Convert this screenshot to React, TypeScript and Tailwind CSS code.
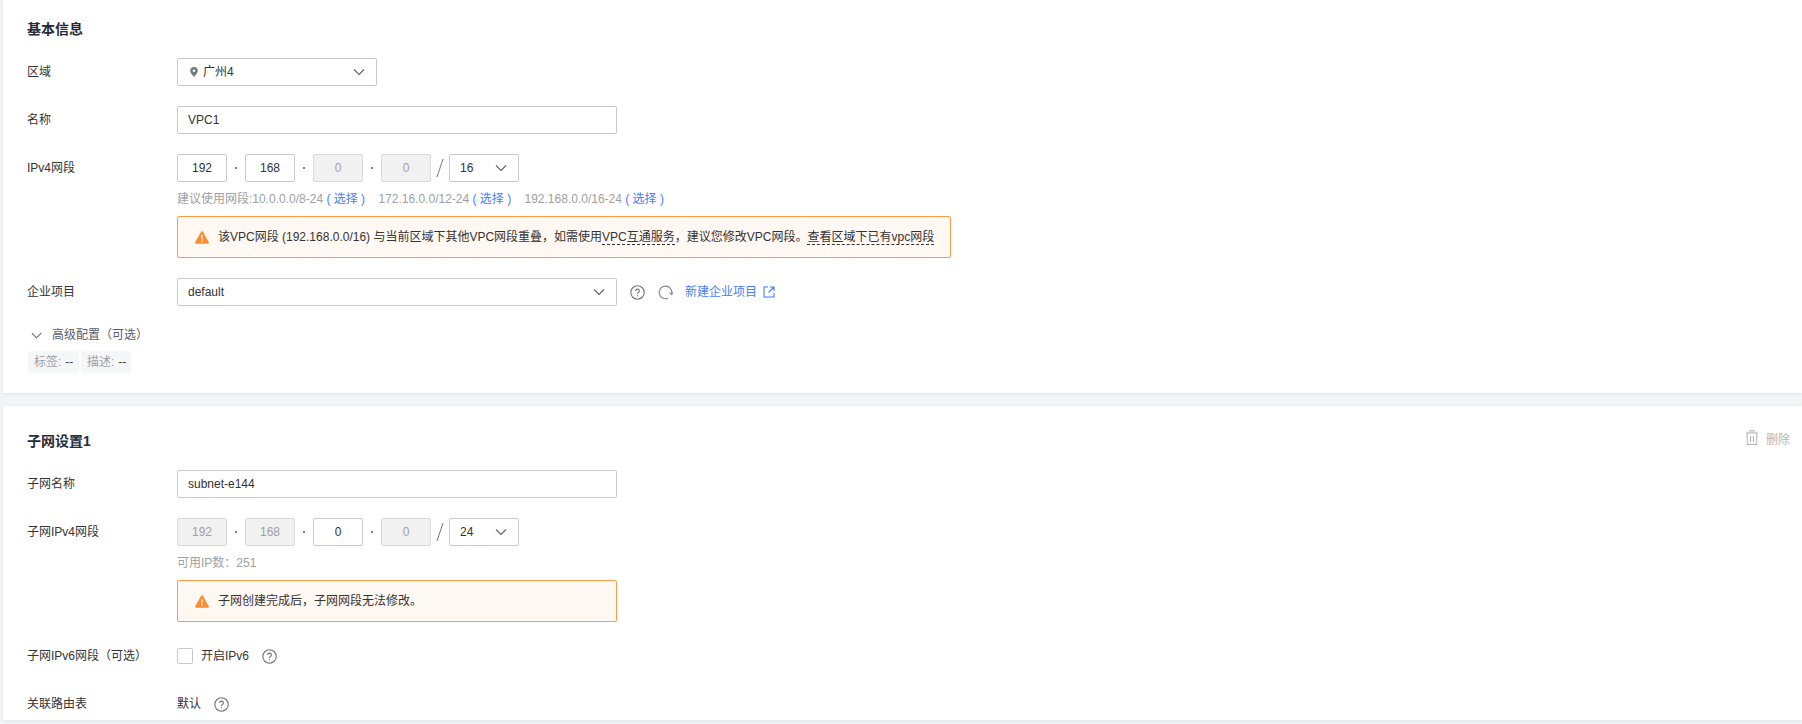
import { ReactNode } from 'react'

const FONT = 'font-["Liberation_Sans","Noto_Sans_CJK_SC",sans-serif]'

function Chevron({ className = 'w-[14px] h-[14px]' }: { className?: string }) {
  return (
    <svg className={className} viewBox="0 0 14 14" fill="none" stroke="#5f636e" strokeWidth={1.1}>
      <path d="M2 4.5l5 5 5-5" />
    </svg>
  )
}

function Help() {
  return (
    <svg className="w-[15px] h-[15px] shrink-0" viewBox="0 0 15 15" fill="none" stroke="#707277" strokeWidth={1.1}>
      <circle cx="7.5" cy="7.5" r="6.7" />
      <path d="M5.6 6c0-1.1.8-1.9 1.9-1.9s1.9.8 1.9 1.8c0 1.4-1.9 1.5-1.9 3" />
      <path d="M7.5 10.2v1.1" />
    </svg>
  )
}

function Warn() {
  return (
    <svg className="w-[14px] h-[13px] shrink-0" viewBox="0 0 14 13">
      <path d="M7 .2a1 1 0 0 1 .9.5l5.9 10.6a1 1 0 0 1-.9 1.5H1.1a1 1 0 0 1-.9-1.5L6.1.7A1 1 0 0 1 7 .2z" fill="#ff8c33" />
      <path d="M6.3 4h1.4l-.2 4.6h-1zM6.3 9.6h1.4v1.5H6.3z" fill="#fff" />
    </svg>
  )
}

function Row({ label, children, className = 'mt-5' }: { label: string; children: ReactNode; className?: string }) {
  return (
    <div className={`flex items-center min-h-7 ${className}`}>
      <div className="w-[150px] shrink-0 text-[#333]">{label}</div>
      {children}
    </div>
  )
}

function Octet({ value, disabled }: { value: string; disabled?: boolean }) {
  return (
    <div
      className={`w-[50px] h-7 flex items-center justify-center rounded-[2px] border ${
        disabled ? 'bg-[#f1f1f1] border-[#d9d9d9] text-[#a0a0a0]' : 'bg-white border-[#c9c9c9] text-[#333]'
      }`}
    >
      {value}
    </div>
  )
}

function IpRow({ parts, mask }: { parts: { v: string; off?: boolean }[]; mask: string }) {
  return (
    <div className="flex items-center">
      {parts.map((p, i) => (
        <div key={i} className="flex items-center">
          {i > 0 && <span className="w-[2px] h-[2px] mx-2 bg-[#808080]" />}
          <Octet value={p.v} disabled={p.off} />
        </div>
      ))}
      <span className="w-[18px] flex justify-center">
        <svg className="w-[8px] h-[20px]" viewBox="0 0 8 20" fill="none" stroke="#777" strokeWidth={1}>
          <path d="M7 1L1 19" />
        </svg>
      </span>
      <div className="w-[70px] h-7 flex items-center justify-between px-[10px] bg-white border border-[#c9c9c9] rounded-[2px] text-[#333]">
        {mask}
        <Chevron />
      </div>
    </div>
  )
}

function Alert({ children, width }: { children: ReactNode; width: string }) {
  return (
    <div className={`ml-[150px] mt-2 h-[42px] flex items-center gap-[9px] pl-[17px] bg-[#fff8f3] border border-[#ff9a4a] rounded-[2px] text-[#333] ${width}`}>
      <Warn />
      <div className="whitespace-nowrap">{children}</div>
    </div>
  )
}

function Pick() {
  return <span className="text-[#4a7bff]"> ( 选择 ) </span>
}

export default function App() {
  return (
    <div className={`h-[724px] overflow-hidden bg-[#f3f4f6] pl-[3px] text-[12px] leading-[18px] ${FONT}`}>
      {/* basic info */}
      <section className="bg-white pt-[19px] pb-5 pl-6 h-[393px] shadow-[0_1px_4px_rgba(0,0,0,0.08)]">
        <h2 className="text-[14px] leading-5 font-bold text-[#252b3a]">基本信息</h2>

        <Row label="区域" className="mt-[19px]">
          <div className="w-[200px] h-7 flex items-center justify-between pl-3 pr-[10px] bg-white border border-[#c9c9c9] rounded-[2px] text-[#333]">
            <span className="flex items-center gap-[5px]">
              <svg className="w-2 h-[10px]" viewBox="0 0 8 10">
                <path fillRule="evenodd" d="M4 0a3.8 3.8 0 0 1 3.8 3.8C7.8 6.2 4 10 4 10S.2 6.2.2 3.8A3.8 3.8 0 0 1 4 0zm0 2.5a1.3 1.3 0 1 0 0 2.6 1.3 1.3 0 0 0 0-2.6z" fill="#77797f" />
              </svg>
              广州4
            </span>
            <Chevron />
          </div>
        </Row>

        <Row label="名称">
          <div className="w-[440px] h-7 flex items-center px-[10px] bg-white border border-[#c9c9c9] rounded-[2px] text-[#333]">VPC1</div>
        </Row>

        <Row label="IPv4网段">
          <IpRow parts={[{ v: '192' }, { v: '168' }, { v: '0', off: true }, { v: '0', off: true }]} mask="16" />
        </Row>

        <div className="ml-[150px] mt-2 h-[18px] text-[#a0a0a0] whitespace-nowrap">
          建议使用网段:10.0.0.0/8-24<Pick />
          <span className="ml-[10px]">172.16.0.0/12-24</span>
          <Pick />
          <span className="ml-[10px]">192.168.0.0/16-24</span>
          <Pick />
        </div>

        <Alert width="w-[774px]">
          该VPC网段 (192.168.0.0/16) 与当前区域下其他VPC网段重叠，如需使用
          <span className="border-b border-dashed border-[#333]">VPC互通服务</span>
          ，建议您修改VPC网段。
          <span className="border-b border-dashed border-[#333]">查看区域下已有vpc网段</span>
        </Alert>

        <Row label="企业项目">
          <div className="w-[440px] h-7 flex items-center justify-between px-[10px] bg-white border border-[#c9c9c9] rounded-[2px] text-[#333]">
            default
            <Chevron />
          </div>
          <div className="ml-[13px] flex items-center">
            <Help />
            <svg className="ml-[13px] w-[15px] h-[15px]" viewBox="0 0 15 15" fill="none" stroke="#85878c" strokeWidth={1.1}>
              <path d="M10 13.2A6.3 6.3 0 1 1 13.7 8.6" />
              <path d="M11.6 7.6l2.1 2 1-2.4" />
            </svg>
            <span className="ml-3 text-[#4a7bff]">新建企业项目</span>
            <svg className="ml-[6px] w-3 h-3" viewBox="0 0 12 12" fill="none" stroke="#4a7bff" strokeWidth={1.1}>
              <path d="M5 1H1v10h10V7M7 1h4v4M11 1L5.5 6.5" />
            </svg>
          </div>
        </Row>

        <div className="mt-[19px] h-5 flex items-center text-[#575d6c]">
          <Chevron className="ml-[3px] w-[13px] h-[13px]" />
          <span className="ml-[9px]">高级配置（可选）</span>
        </div>
        <div className="ml-[1px] mt-[6px] flex gap-[2px]">
          <span className="h-[22px] w-[51px] flex items-center pl-[6px] bg-[#f5f6f8] rounded-[2px] text-[#a0a0a0]">
            标签:<span className="ml-1 text-[#444]">--</span>
          </span>
          <span className="h-[22px] w-[50px] flex items-center pl-[6px] bg-[#f5f6f8] rounded-[2px] text-[#a0a0a0]">
            描述:<span className="ml-1 text-[#444]">--</span>
          </span>
        </div>
      </section>

      {/* subnet */}
      <section className="mt-[13px] bg-white pt-[25px] pl-6 h-[314px] shadow-[0_1px_4px_rgba(0,0,0,0.08)]">
        <div className="flex justify-between pr-3">
          <h2 className="text-[14px] leading-5 font-bold text-[#252b3a]">子网设置1</h2>
          <div className="-mt-[1px] flex items-start gap-[8px] h-[15px] text-[#b5b5b5]">
            <svg className="w-3 h-[15px]" viewBox="0 0 12 15" fill="none" stroke="#b0b0b0" strokeWidth={1}>
              <path d="M0 3h12M4 3V.7h4V3M1.2 3v11.5h9.6V3M4.6 6v6M7.4 6v6" />
            </svg>
            <span className="pt-[1px]">删除</span>
          </div>
        </div>

        <Row label="子网名称" className="mt-[19px]">
          <div className="w-[440px] h-7 flex items-center px-[10px] bg-white border border-[#c9c9c9] rounded-[2px] text-[#333]">subnet-e144</div>
        </Row>

        <Row label="子网IPv4网段">
          <IpRow parts={[{ v: '192', off: true }, { v: '168', off: true }, { v: '0' }, { v: '0', off: true }]} mask="24" />
        </Row>

        <div className="ml-[150px] mt-2 h-[18px] text-[#a0a0a0]">可用IP数：251</div>

        <Alert width="w-[440px]">子网创建完成后，子网网段无法修改。</Alert>

        <Row label="子网IPv6网段（可选）">
          <span className="w-4 h-4 bg-white border border-[#c9c9c9] rounded-[2px]" />
          <span className="ml-2 text-[#333]">开启IPv6</span>
          <span className="ml-[13px]">
            <Help />
          </span>
        </Row>

        <Row label="关联路由表">
          <span className="text-[#333]">默认</span>
          <span className="ml-[13px]">
            <Help />
          </span>
        </Row>
      </section>
    </div>
  )
}
